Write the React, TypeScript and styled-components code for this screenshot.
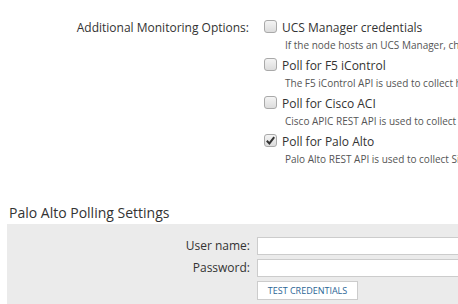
import React from 'react';
import styled, { createGlobalStyle } from 'styled-components';

const GlobalStyle = createGlobalStyle`
  html, body {
    margin: 0;
    padding: 0;
    background: #fff;
    overflow: hidden;
  }
  body {
    font-family: "Open Sans", "Liberation Sans", sans-serif;
    color: #333;
  }
`;

interface MonitoringOption {
  title: string;
  description: string;
  checked: boolean;
}

const options: MonitoringOption[] = [
  {
    title: 'UCS Manager credentials',
    description: 'If the node hosts an UCS Manager, check this box and enter the credentials.',
    checked: false,
  },
  {
    title: 'Poll for F5 iControl',
    description: 'The F5 iControl API is used to collect health and performance data.',
    checked: false,
  },
  {
    title: 'Poll for Cisco ACI',
    description: 'Cisco APIC REST API is used to collect health and fault data.',
    checked: false,
  },
  {
    title: 'Poll for Palo Alto',
    description: 'Palo Alto REST API is used to collect Site to Site VPN data.',
    checked: true,
  },
];

const App = () => {
  return (
    <>
      <GlobalStyle />
      <Page>
        <FormRow>
          <FieldLabel>Additional Monitoring Options:</FieldLabel>
          <OptionList>
            {options.map((opt) => (
              <Option key={opt.title}>
                <OptionTitle>
                  <CheckBox checked={opt.checked}>
                    {opt.checked && (
                      <svg width="9" height="9" viewBox="0 0 9 9">
                        <path d="M0.8 4.8 L3.4 7.4 L8.2 1.2" fill="none" stroke="#333" strokeWidth="2" />
                      </svg>
                    )}
                  </CheckBox>
                  {opt.title}
                </OptionTitle>
                <Description>{opt.description}</Description>
              </Option>
            ))}
          </OptionList>
        </FormRow>

        <SectionTitle>Palo Alto Polling Settings</SectionTitle>
        <Panel>
          <PanelRow>
            <PanelLabel>User name:</PanelLabel>
            <TextInput type="text" />
          </PanelRow>
          <PanelRow>
            <PanelLabel>Password:</PanelLabel>
            <TextInput type="password" />
          </PanelRow>
          <PanelRow>
            <span />
            <TestButton>Test credentials</TestButton>
          </PanelRow>
        </Panel>
      </Page>
    </>
  );
};

const Page = styled.div`
  padding-top: 19px;
  width: 458px;
  height: 304px;
  overflow: hidden;
`;

const FormRow = styled.div`
  display: grid;
  grid-template-columns: 249px 1fr;
  column-gap: 15px;
`;

const FieldLabel = styled.div`
  font-size: 12px;
  line-height: 18px;
  text-align: right;
  color: #333;
`;

const OptionList = styled.div`
  display: flex;
  flex-direction: column;
`;

const Option = styled.div`
  margin-bottom: 5px;
`;

const OptionTitle = styled.div`
  display: flex;
  align-items: center;
  gap: 5px;
  font-size: 12px;
  line-height: 18px;
  white-space: nowrap;
  color: #333;
`;

const CheckBox = styled.span<{ checked?: boolean }>`
  box-sizing: border-box;
  width: 13px;
  height: 13px;
  margin-top: -3px;
  border: 1px solid #a9a9a9;
  border-radius: 3px;
  background: linear-gradient(#f4f4f4, #dcdcdc);
  display: flex;
  align-items: center;
  justify-content: center;
  flex-shrink: 0;
`;

const Description = styled.div`
  margin-top: 1px;
  padding-left: 21px;
  font-size: 10px;
  line-height: 14px;
  white-space: nowrap;
  color: #555;
`;

const SectionTitle = styled.div`
  margin-top: 33px;
  padding-left: 9px;
  font-size: 14px;
  line-height: 18px;
  color: #333;
`;

const Panel = styled.div`
  margin: 2px 0 0 7px;
  width: 600px;
  padding-top: 13px;
  padding-bottom: 10px;
  background: #ebebeb;
  display: flex;
  flex-direction: column;
  gap: 4px;
`;

const PanelRow = styled.div`
  display: grid;
  grid-template-columns: 243px 1fr;
  column-gap: 7px;
  align-items: center;
`;

const PanelLabel = styled.label`
  font-size: 12px;
  line-height: 18px;
  text-align: right;
  color: #333;
`;

const TextInput = styled.input`
  box-sizing: border-box;
  width: 260px;
  height: 18px;
  border: 1px solid #ccc;
  background: #fff;
  margin: 0;
  padding: 0 4px;
  outline: none;
`;

const TestButton = styled.button`
  box-sizing: border-box;
  justify-self: start;
  width: 101px;
  height: 19px;
  margin: 0;
  padding: 0;
  border: 1px solid #ccc;
  background: #fff;
  color: #2b6596;
  font-family: "Open Sans", "Liberation Sans", sans-serif;
  font-size: 9px;
  line-height: 17px;
  text-transform: uppercase;
  cursor: pointer;
`;

export default App;
